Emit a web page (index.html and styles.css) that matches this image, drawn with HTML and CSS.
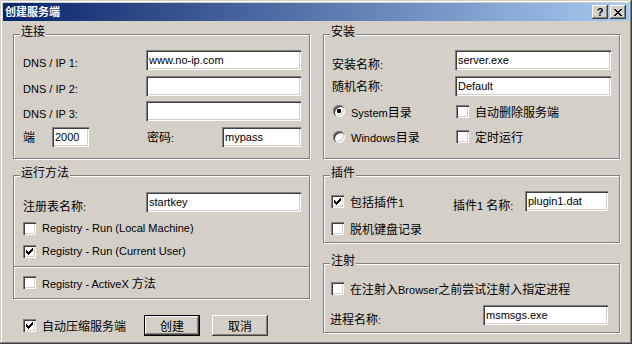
FILE: index.html
```html
<!DOCTYPE html>
<html lang="zh-CN">
<head>
    <meta charset="UTF-8">
    <title>创建服务端</title>
    <link rel="stylesheet" href="styles.css">
</head>
<body>
<div class="window">
    <div class="titlebar">
        <span class="title">创建服务端</span>
        <div class="caption-btns">
            <span class="cap-btn">?</span>
            <span class="cap-btn">
                <svg width="8" height="7" viewBox="0 0 8 7" shape-rendering="crispEdges"><path d="M0 0h2v1h-2zM6 0h2v1h-2zM1 1h2v1h-2zM5 1h2v1h-2zM2 2h4v1h-4zM3 3h2v1h-2zM2 4h4v1h-4zM1 5h2v1h-2zM5 5h2v1h-2zM0 6h2v1h-2zM6 6h2v1h-2z"/></svg>
            </span>
        </div>
    </div>

    <div class="client">
        <!-- left column -->
        <div class="col">
            <div class="group g-conn">
                <span class="group-title">连接</span>
                <div class="row"><span class="lbl low lat">DNS / IP 1:</span><div class="edit">www.no-ip.com</div></div>
                <div class="row"><span class="lbl low lat">DNS / IP 2:</span><div class="edit"></div></div>
                <div class="row"><span class="lbl low lat">DNS / IP 3:</span><div class="edit"></div></div>
                <div class="row">
                    <span class="lbl-port">端</span><div class="edit e-port">2000</div>
                    <span class="lbl-pw">密码<span class="lat">:</span></span><div class="edit">mypass</div>
                </div>
            </div>

            <div class="group g-run">
                <span class="group-title">运行方法</span>
                <div class="sect1">
                    <div class="row"><span class="lbl low">注册表名称<span class="lat">:</span></span><div class="edit">startkey</div></div>
                    <div class="row r-a"><span class="cb"></span><span class="lat">Registry - Run (Local Machine)</span></div>
                    <div class="row r-b"><span class="cb"><svg width="7" height="7" viewBox="0 0 7 7" shape-rendering="crispEdges"><path d="M6 0h1v1h-1zM5 1h2v1h-2zM0 2h1v1h-1zM4 2h3v1h-3zM0 3h2v1h-2zM3 3h3v1h-3zM0 4h5v1h-5zM1 5h3v1h-3zM2 6h1v1h-1z"/></svg></span><span class="lat">Registry - Run (Current User)</span></div>
                </div>
                <div class="sect2">
                    <div class="row"><span class="cb"></span><span><span class="lat">Registry - ActiveX </span>方法</span></div>
                </div>
            </div>

            <div class="bottom">
                <div class="bottom-check">
                    <span class="cb"><svg width="7" height="7" viewBox="0 0 7 7" shape-rendering="crispEdges"><path d="M6 0h1v1h-1zM5 1h2v1h-2zM0 2h1v1h-1zM4 2h3v1h-3zM0 3h2v1h-2zM3 3h3v1h-3zM0 4h5v1h-5zM1 5h3v1h-3zM2 6h1v1h-1z"/></svg></span>
                    <span>自动压缩服务端</span>
                </div>
                <span class="btn default">创建</span>
                <span class="btn">取消</span>
            </div>
        </div>

        <!-- right column -->
        <div class="col">
            <div class="group g-inst">
                <span class="group-title">安装</span>
                <div class="row"><span class="lbl low">安装名称<span class="lat">:</span></span><div class="edit">server.exe</div></div>
                <div class="row"><span class="lbl">随机名称<span class="lat">:</span></span><div class="edit">Default</div></div>
                <div class="row">
                    <div class="opt"><span class="rb on"></span><span><span class="lat">System</span>目录</span></div>
                    <div class="opt"><span class="cb"></span><span>自动删除服务端</span></div>
                </div>
                <div class="row">
                    <div class="opt"><span class="rb"></span><span><span class="lat">Windows</span>目录</span></div>
                    <div class="opt"><span class="cb"></span><span>定时运行</span></div>
                </div>
            </div>

            <div class="group g-plug">
                <span class="group-title">插件</span>
                <div class="row">
                    <div class="opt"><span class="cb"><svg width="7" height="7" viewBox="0 0 7 7" shape-rendering="crispEdges"><path d="M6 0h1v1h-1zM5 1h2v1h-2zM0 2h1v1h-1zM4 2h3v1h-3zM0 3h2v1h-2zM3 3h3v1h-3zM0 4h5v1h-5zM1 5h3v1h-3zM2 6h1v1h-1z"/></svg></span><span>包括插件<span class="lat">1</span></span></div>
                    <span class="lbl low">插件<span class="lat">1 </span>名称<span class="lat">:</span></span><div class="edit">plugin1.dat</div>
                </div>
                <div class="row"><div class="opt"><span class="cb"></span><span>脱机键盘记录</span></div></div>
            </div>

            <div class="group g-inj">
                <span class="group-title">注射</span>
                <div class="row"><div class="opt"><span class="cb"></span><span>在注射入<span class="lat">Browser</span>之前尝试注射入指定进程</span></div></div>
                <div class="row"><span class="lbl low">进程名称<span class="lat">:</span></span><div class="edit">msmsgs.exe</div></div>
            </div>
        </div>
    </div>
</div>
</body>
</html>
```

FILE: styles.css
```css
* {
    box-sizing: border-box;
}
body {
    margin: 0;
    background: #d4d0c8;
    font-family: "Liberation Sans", "Noto Sans CJK SC", sans-serif;
    font-size: 12px;
    color: #000;
}
.lat {
    font-size: 11px;
}
.window {
    width: 632px;
    height: 344px;
    padding: 3px;
    background: #d4d0c8;
    box-shadow: inset -1px -1px #404040, inset 1px 1px #d4d0c8, inset -2px -2px #808080, inset 2px 2px #fff;
}

/* title bar */
.titlebar {
    height: 18px;
    display: flex;
    align-items: center;
    padding: 0 3px 0 2px;
    background: linear-gradient(to right, #0a246a, #a6caf0);
}
.title {
    color: #fff;
    font-weight: bold;
    font-size: 11px;
    line-height: 18px;
}
.caption-btns {
    margin-left: auto;
    display: flex;
    gap: 2px;
}
.cap-btn {
    width: 16px;
    height: 14px;
    display: flex;
    align-items: center;
    justify-content: center;
    background: #d4d0c8;
    font: bold 11px "Liberation Sans", sans-serif;
    box-shadow: inset -1px -1px #404040, inset 1px 1px #fff, inset -2px -2px #808080, inset 2px 2px #d4d0c8;
}

/* layout */
.client {
    display: grid;
    grid-template-columns: 297px 297px;
    column-gap: 13px;
    padding: 13px 0 0 10px;
}
.col {
    display: flex;
    flex-direction: column;
}
.group {
    position: relative;
    border: 1px solid #808080;
    box-shadow: inset 1px 1px #fff, 1px 1px #fff;
    display: flex;
    flex-direction: column;
}
.group-title {
    position: absolute;
    top: -10px;
    left: 6px;
    padding: 0 1px;
    line-height: 14px;
    background: #d4d0c8;
}
.row {
    display: flex;
    align-items: center;
    height: 20px;
    white-space: nowrap;
}
.lbl {
    width: 123px;
    flex: none;
}
.lbl.low {
    padding-top: 6px;
}
.edit {
    flex: 1;
    height: 20px;
    padding: 0 3px;
    font-size: 11px;
    line-height: 20px;
    overflow: hidden;
    background: #fff;
    box-shadow: inset 1px 1px #808080, inset 2px 2px #404040, inset -1px -1px #fff, inset -2px -2px #d4d0c8;
}

/* 连接 */
.g-conn {
    height: 125px;
    padding: 15px 8px 0 9px;
    gap: 5.67px;
}
.lbl-port {
    width: 29px;
}
.e-port {
    flex: none;
    width: 37px;
}
.lbl-pw {
    width: 75px;
    margin-left: 58px;
}

/* 运行方法 */
.g-run {
    height: 124px;
    margin-top: 16px;
}
.sect1 {
    padding: 16px 8px 5px 9px;
}
.r-a {
    margin-top: 6px;
}
.r-b {
    margin-top: 3px;
}
.r-a, .r-b, .sect2 .row, .opt, .bottom-check {
    gap: 6px;
}
.sect2 {
    padding: 5px 9px 0;
    border-top: 1px solid #808080;
    box-shadow: inset 0 1px #fff;
}

/* bottom buttons */
.bottom {
    display: flex;
    align-items: center;
    height: 21px;
    margin-top: 16px;
    padding-left: 10px;
    gap: 12px;
}
.bottom-check {
    display: flex;
    align-items: center;
    width: 109px;
}
.btn {
    width: 56px;
    height: 21px;
    display: flex;
    align-items: center;
    justify-content: center;
    box-shadow: inset -1px -1px #404040, inset 1px 1px #fff, inset -2px -2px #808080, inset 2px 2px #d4d0c8;
}
.btn.default {
    box-shadow: inset 0 0 0 1px #000, inset -2px -2px #404040, inset 2px 2px #fff, inset -3px -3px #808080;
}

/* 安装 */
.g-inst {
    height: 125px;
    padding: 15px 8px 0 8px;
    gap: 5.67px;
}
.opt {
    display: flex;
    align-items: center;
    width: 123px;
    padding-left: 1px;
}

/* 插件 */
.g-plug {
    height: 68px;
    margin-top: 16px;
    padding: 15px 11px 0 7px;
    gap: 7px;
}
.g-plug .opt {
    width: 122px;
    padding-left: 0;
}
.g-plug .lbl {
    width: 72px;
}

/* 注射 */
.g-inj {
    height: 70px;
    margin-top: 20px;
    padding: 14px 11px 0 6px;
    gap: 7px;
}
.g-inj .opt {
    width: auto;
}
.g-inj .lbl {
    width: 153px;
}

/* checkbox & radio */
.cb {
    flex: none;
    width: 13px;
    height: 13px;
    padding: 3px;
    background: #fff;
    box-shadow: inset 1px 1px #808080, inset 2px 2px #404040, inset -1px -1px #fff, inset -2px -2px #d4d0c8;
}
.cb svg {
    display: block;
}
.rb {
    flex: none;
    width: 12px;
    height: 12px;
    border-radius: 50%;
    display: flex;
    align-items: center;
    justify-content: center;
    background: #fff;
    box-shadow: inset 1px 1px #808080, inset 2px 2px #404040, inset -1px -1px #fff, inset -2px -2px #d4d0c8;
}
.rb.on::after {
    content: "";
    width: 4px;
    height: 4px;
    border-radius: 1px;
    background: #000;
}
```
